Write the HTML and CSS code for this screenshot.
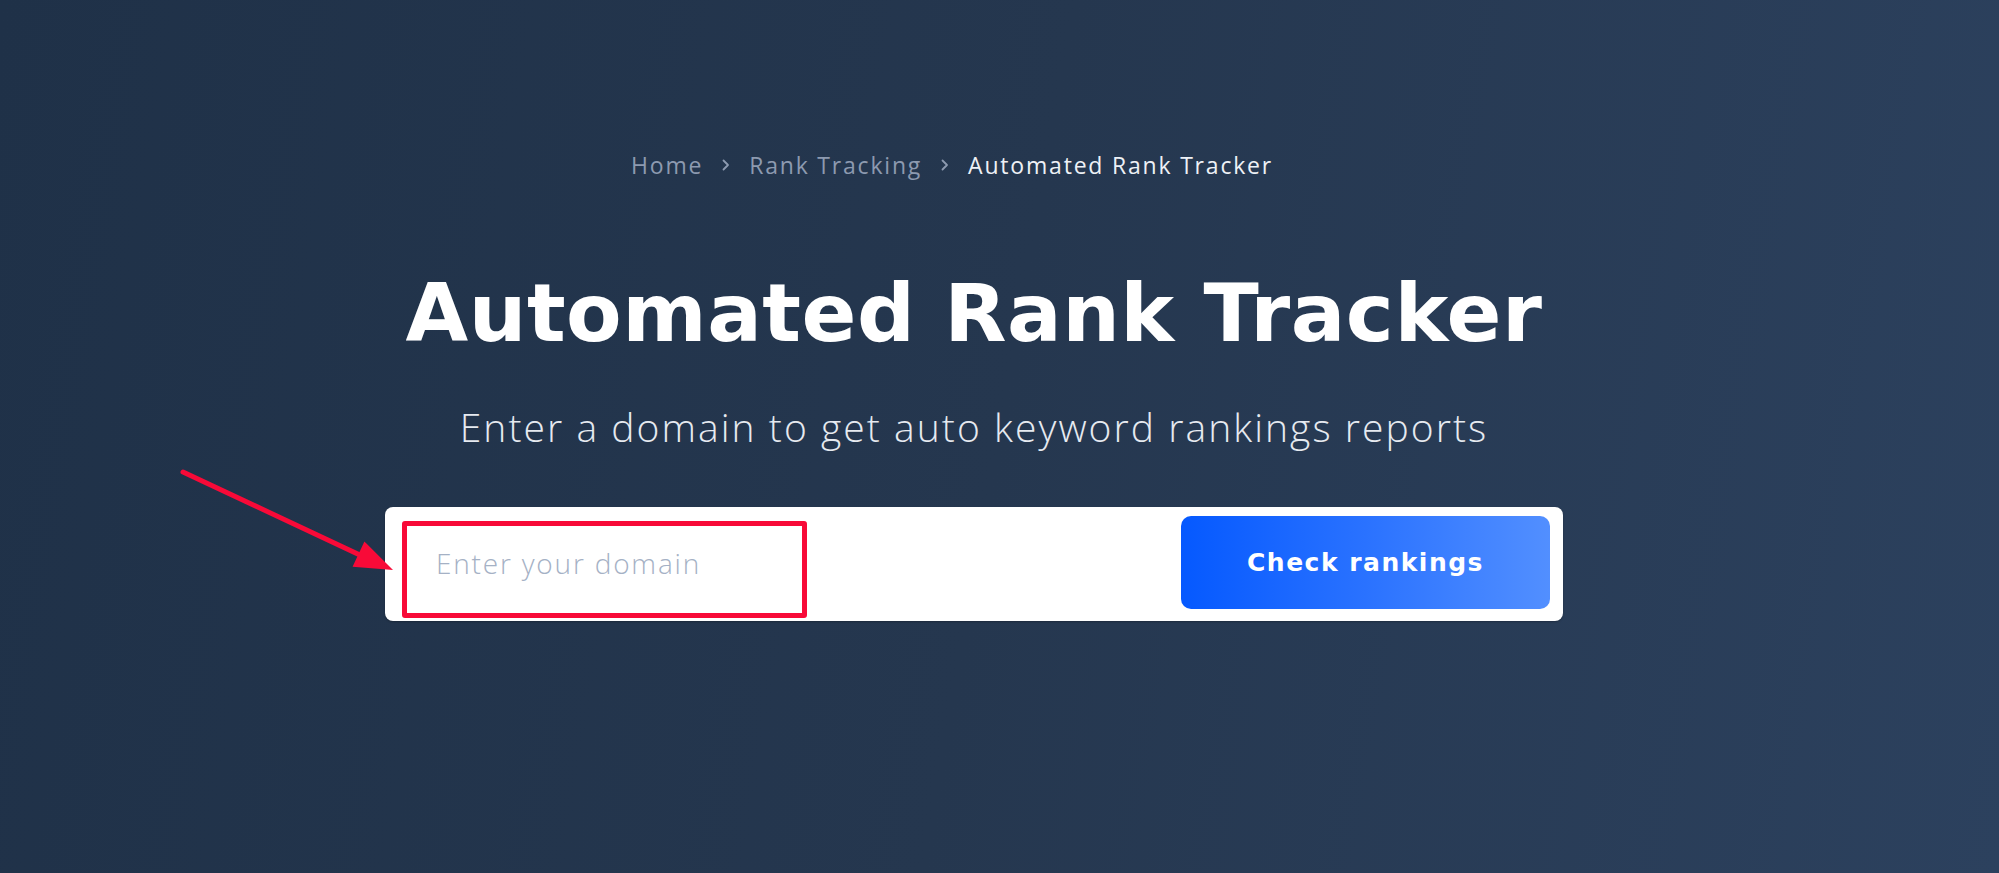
FILE: index.html
```html
<!DOCTYPE html>
<html lang="en">
<head>
  <meta charset="UTF-8">
  <meta name="viewport" content="width=device-width, initial-scale=1.0">
  <title>Automated Rank Tracker</title>
  <link rel="stylesheet" href="styles.css">
</head>
<body>

  <section class="hero">
    <nav class="breadcrumb">
      <a href="#" class="crumb">Home</a>
      <svg class="sep" viewBox="0 0 8 12" width="8" height="12"><path d="M1.5 1.5 L6 6 L1.5 10.5" fill="none" stroke="currentColor" stroke-width="1.8" stroke-linecap="round" stroke-linejoin="round"/></svg>
      <a href="#" class="crumb">Rank Tracking</a>
      <svg class="sep" viewBox="0 0 8 12" width="8" height="12"><path d="M1.5 1.5 L6 6 L1.5 10.5" fill="none" stroke="currentColor" stroke-width="1.8" stroke-linecap="round" stroke-linejoin="round"/></svg>
      <span class="crumb current">Automated Rank Tracker</span>
    </nav>

    <h1 class="title">Automated Rank Tracker</h1>
    <p class="subtitle">Enter a domain to get auto keyword rankings reports</p>

    <form class="search" onsubmit="return false">
      <input type="text" class="search-input" placeholder="Enter your domain">
      <button type="submit" class="search-btn">Check rankings</button>
      <!-- annotation box -->
      <span class="highlight"></span>
    </form>

    <!-- annotation arrow -->
    <svg class="arrow" width="240" height="125" viewBox="0 0 240 125">
      <line x1="13" y1="12" x2="192" y2="96" stroke="#f80a38" stroke-width="5" stroke-linecap="round"/>
      <polygon points="223,110 182.6,106.8 194.4,81.4" fill="#f80a38"/>
    </svg>
  </section>

</body>
</html>
```

FILE: styles.css
```css
html, body {
  margin: 0;
  padding: 0;
  height: 873px;
  overflow: hidden;
}

body {
  font-family: 'Open Sans', 'Liberation Sans', sans-serif;
  background: linear-gradient(100deg, #1f3148 0%, #25374f 50%, #2c415e 100%);
  color: #fff;
}

.hero {
  position: relative;
  display: flex;
  flex-direction: column;
  align-items: center;
  padding: 150px 51px 0 0;
}

.breadcrumb {
  display: flex;
  align-items: center;
  gap: 19px;
  margin-right: 44px;
  font-size: 23px;
  line-height: 30px;
  letter-spacing: 1.8px;
}

.crumb {
  color: #8d9ab0;
  text-decoration: none;
}

.crumb.current {
  color: #eef1f6;
}

.sep {
  color: #8d9ab0;
}

.title {
  margin: 85px 0 0;
  font-family: 'DejaVu Sans', sans-serif;
  font-weight: 700;
  font-size: 81px;
  line-height: 96px;
  letter-spacing: 0.5px;
  color: #fff;
}

.subtitle {
  margin: 39px 0 0;
  font-weight: 300;
  font-size: 39px;
  line-height: 54px;
  letter-spacing: 2.05px;
  color: #e6eaf0;
}

.search {
  position: relative;
  display: flex;
  align-items: center;
  box-sizing: border-box;
  width: 1178px;
  height: 114px;
  margin-top: 53px;
  padding: 0 13px 3px 0;
  background: #fff;
  border-radius: 8px;
  box-shadow: 0 1px 2px rgba(0, 0, 0, 0.25);
}

.search-input {
  flex: 1;
  height: 93px;
  border: none;
  outline: none;
  padding: 0 0 0 51px;
  font-family: 'Open Sans', sans-serif;
  font-weight: 300;
  font-size: 28px;
  letter-spacing: 1.8px;
  color: #2a3a52;
  background: transparent;
}

.search-input::placeholder {
  color: #a5b1c5;
}

.search-btn {
  width: 369px;
  height: 93px;
  border: none;
  border-radius: 10px;
  background: linear-gradient(90deg, #0559ff 0%, #2a72ff 50%, #528fff 100%);
  color: #fff;
  font-family: 'DejaVu Sans', sans-serif;
  font-weight: 700;
  font-size: 25px;
  letter-spacing: 1.5px;
  cursor: pointer;
}

.highlight {
  position: absolute;
  left: 17px;
  top: 14px;
  width: 405px;
  height: 97px;
  box-sizing: border-box;
  border: 5px solid #f80a38;
  border-radius: 3px;
  pointer-events: none;
}

.arrow {
  position: absolute;
  left: 170px;
  top: 460px;
}
```
